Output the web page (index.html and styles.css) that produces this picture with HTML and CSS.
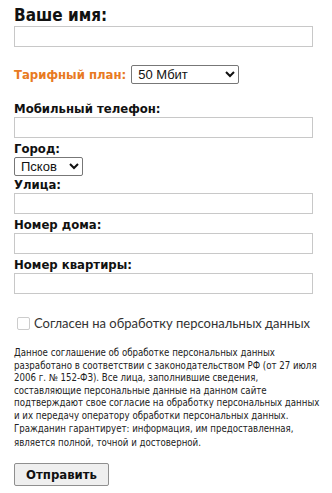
FILE: index.html
```html
<!DOCTYPE html>
<html lang="ru">
<head>
  <meta charset="UTF-8">
  <meta name="viewport" content="width=device-width, initial-scale=1">
  <title>Заявка на подключение</title>
  <link rel="stylesheet" href="styles.css">
</head>
<body>
  <form class="order-form">
    <h2 class="name-title">Ваше имя:</h2>
    <input type="text" class="field">

    <div class="tariff">
      <span class="tariff-label">Тарифный план:</span>
      <select class="tariff-select">
        <option>50 Мбит</option>
        <option>100 Мбит</option>
      </select>
    </div>

    <label class="label">Мобильный телефон:</label>
    <input type="text" class="field">

    <label class="label">Город:</label>
    <select class="city-select">
      <option>Псков</option>
    </select>

    <label class="label">Улица:</label>
    <input type="text" class="field">

    <label class="label">Номер дома:</label>
    <input type="text" class="field">

    <label class="label">Номер квартиры:</label>
    <input type="text" class="field">

    <div class="agree">
      <span class="check"></span>
      <span class="agree-text">Согласен на обработку персональных данных</span>
    </div>

    <p class="notice">Данное соглашение об обработке персональных данных<br>
    разработано в соответствии с законодательством РФ (от 27 июля<br>
    2006 г. № 152-ФЗ). Все лица, заполнившие сведения,<br>
    составляющие персональные данные на данном сайте<br>
    подтверждают свое согласие на обработку персональных данных<br>
    и их передачу оператору обработки персональных данных.<br>
    Гражданин гарантирует: информация, им предоставленная,<br>
    <span class="last-line">является полной, точной и достоверной.</span></p>

    <button type="button" class="submit">Отправить</button>
  </form>
</body>
</html>
```

FILE: styles.css
```css
* {
  margin: 0;
  padding: 0;
  box-sizing: border-box;
}
body {
  font-family: "DejaVu Sans Condensed", "DejaVu Sans", sans-serif;
  color: #111;
  background: #fff;
}
.order-form {
  display: flex;
  flex-direction: column;
  align-items: flex-start;
  padding: 5px 19px 0 14px;
}
.name-title {
  font-size: 17px;
  font-weight: bold;
  line-height: 21px;
}
.field {
  width: 100%;
  height: 21px;
  border: 1px solid #c8c8c8;
  background: #fff;
}
.tariff {
  display: flex;
  align-items: center;
  gap: 5px;
  margin-top: 18px;
}
.tariff-label {
  color: #e87a22;
  font-weight: bold;
  font-size: 13px;
}
select {
  font-family: "Liberation Sans", Arial, sans-serif;
  font-size: 13px;
  color: #111;
  border: 1px solid #777;
  border-radius: 2px;
  background: #fff;
  padding: 0 2px;
}
.tariff-select {
  width: 108px;
  height: 19px;
}
.city-select {
  width: 69px;
  height: 19px;
}
.label {
  font-size: 13px;
  font-weight: bold;
  line-height: 17px;
  margin-top: 2px;
}
.tariff + .label {
  margin-top: 16px;
}
.city-select + .label {
  margin-top: 0;
}
.agree {
  display: flex;
  align-items: center;
  gap: 4px;
  margin: 21px 0 0 3px;
  white-space: nowrap;
}
.check {
  width: 13px;
  height: 13px;
  border: 1px solid #ccc;
  border-radius: 2px;
}
.agree-text {
  font-family: Lato, "Open Sans", sans-serif;
  font-size: 13px;
  color: #333;
}
.notice {
  font-size: 9.6px;
  line-height: 12.6px;
  color: #222;
  margin: 16px -12px 0 0;
}
.last-line {
  display: inline-block;
  margin-top: 2px;
}
.submit {
  margin-top: 13px;
  width: 95px;
  height: 23px;
  font-family: "DejaVu Sans Condensed", "DejaVu Sans", sans-serif;
  font-size: 13px;
  font-weight: bold;
  color: #111;
  background: #efefef;
  border: 1px solid #8f8f8f;
  border-radius: 2px;
}
```
